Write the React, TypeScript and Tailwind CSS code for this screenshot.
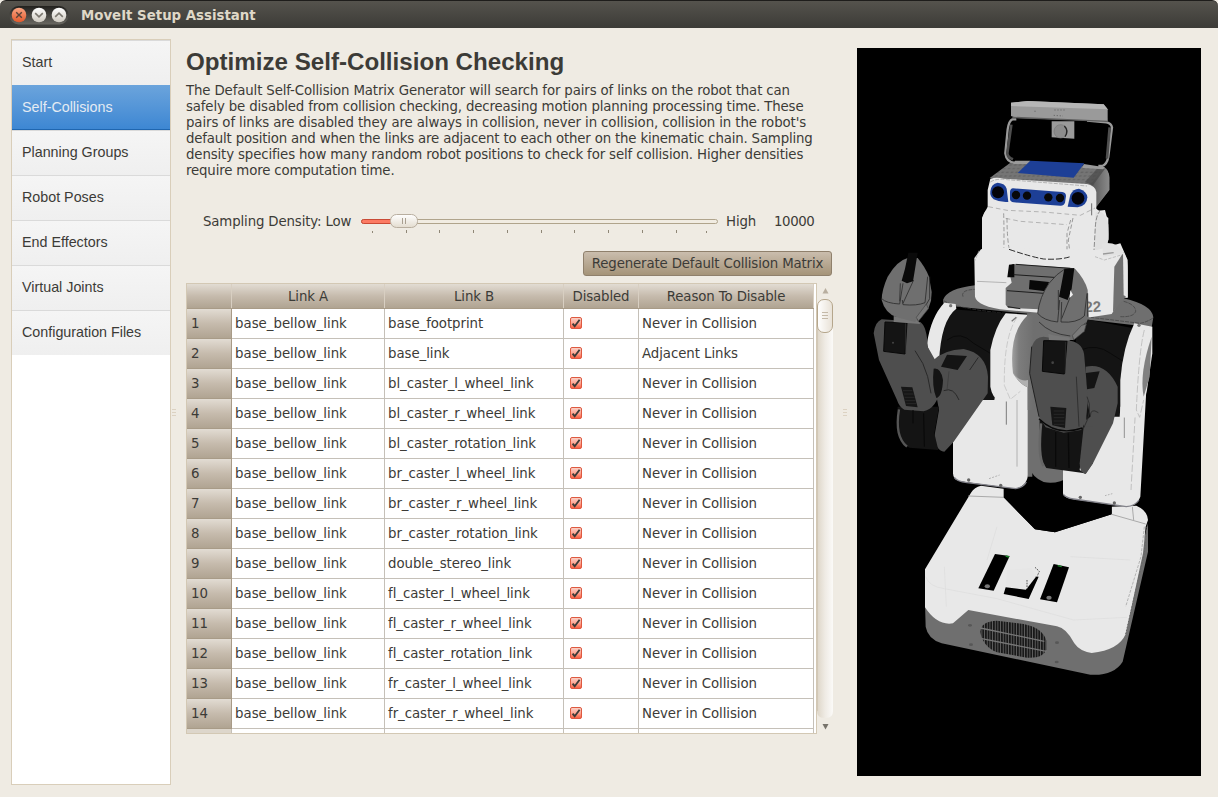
import React from "react";

const navItems = [
  "Start",
  "Self-Collisions",
  "Planning Groups",
  "Robot Poses",
  "End Effectors",
  "Virtual Joints",
  "Configuration Files",
];

const intro: [string, string][] = [
  ["tracking-[-0.137px]", "The Default Self-Collision Matrix Generator will search for pairs of links on the robot that can"],
  ["tracking-[-0.15px]", "safely be disabled from collision checking, decreasing motion planning processing time. These"],
  ["tracking-[-0.107px]", "pairs of links are disabled they are always in collision, never in collision, collision in the robot's"],
  ["tracking-[-0.18px]", "default position and when the links are adjacent to each other on the kinematic chain. Sampling"],
  ["tracking-[-0.137px]", "density specifies how many random robot positions to check for self collision. Higher densities"],
  ["tracking-[-0.16px]", "require more computation time."],
];

const rows: [string, string][] = [
  ["base_footprint", "Never in Collision"],
  ["base_link", "Adjacent Links"],
  ["bl_caster_l_wheel_link", "Never in Collision"],
  ["bl_caster_r_wheel_link", "Never in Collision"],
  ["bl_caster_rotation_link", "Never in Collision"],
  ["br_caster_l_wheel_link", "Never in Collision"],
  ["br_caster_r_wheel_link", "Never in Collision"],
  ["br_caster_rotation_link", "Never in Collision"],
  ["double_stereo_link", "Never in Collision"],
  ["fl_caster_l_wheel_link", "Never in Collision"],
  ["fl_caster_r_wheel_link", "Never in Collision"],
  ["fl_caster_rotation_link", "Never in Collision"],
  ["fr_caster_l_wheel_link", "Never in Collision"],
  ["fr_caster_r_wheel_link", "Never in Collision"],
];

const ticks = [11, 45, 78, 112, 146, 180, 213, 247, 281, 315, 345];

function WindowButtons() {
  return (
    <svg width="60" height="20" viewBox="0 0 60 20" className="shrink-0">
      <defs>
        <linearGradient id="wb-tray" x1="0" y1="0" x2="0" y2="1">
          <stop offset="0" stopColor="#22211e" />
          <stop offset="1" stopColor="#6a6862" />
        </linearGradient>
        <linearGradient id="wb-close" x1="0" y1="0" x2="0" y2="1">
          <stop offset="0" stopColor="#f9a583" />
          <stop offset="1" stopColor="#e2592c" />
        </linearGradient>
        <linearGradient id="wb-plain" x1="0" y1="0" x2="0" y2="1">
          <stop offset="0" stopColor="#ffffff" />
          <stop offset="1" stopColor="#cfcac0" />
        </linearGradient>
      </defs>
      <rect x="0.5" y="1" width="59" height="18.5" rx="9" fill="url(#wb-tray)" />
      <circle cx="10" cy="10" r="7.3" fill="url(#wb-close)" />
      <circle cx="30" cy="10" r="7.3" fill="url(#wb-plain)" />
      <circle cx="50" cy="10" r="7.3" fill="url(#wb-plain)" />
      <path d="M7.2 7.2l5.6 5.6M12.8 7.2l-5.6 5.6" stroke="#5a4238" strokeWidth="1.4" />
      <path d="M26.2 8.2l3.8 3.6l3.8-3.6" fill="none" stroke="#7b776f" strokeWidth="1.6" />
      <path d="M46.2 11.8l3.8-3.6l3.8 3.6" fill="none" stroke="#7b776f" strokeWidth="1.6" />
    </svg>
  );
}

function Check() {
  return (
    <svg width="12" height="12" viewBox="0 0 12 12">
      <defs>
        <linearGradient id="ck" x1="0" y1="0" x2="0" y2="1">
          <stop offset="0" stopColor="#fbd3ca" />
          <stop offset="0.5" stopColor="#fda794" />
          <stop offset="1" stopColor="#f9593c" />
        </linearGradient>
      </defs>
      <rect x="0.5" y="0.5" width="11" height="11" rx="1.5" fill="url(#ck)" stroke="#dd5a41" />
      <path d="M2.6 6.6L4.7 9.3L9.6 2.8" fill="none" stroke="#3c3b37" strokeWidth="1.9" />
    </svg>
  );
}

function Grip() {
  return (
    <svg width="4" height="7" viewBox="0 0 4 7" className="shrink-0">
      {[0, 3, 6].map((y) => (
        <rect key={y} x="0" y={y} width="4" height="1" fill="#dcd2c2" />
      ))}
    </svg>
  );
}

function Robot() {
  const W = "#e8e8e8";
  const G = "#6f6f6f";
  const D = "#4e4e4e";
  const K = "#141414";
  return (
    <svg width="344" height="728" viewBox="0 -126 1032 2184" className="block">
      <defs>
        <linearGradient id="headside" x1="0" y1="0" x2="1" y2="0">
          <stop offset="0" stopColor="#555" />
          <stop offset="1" stopColor="#8a8a8a" />
        </linearGradient>
        <linearGradient id="spine" gradientUnits="userSpaceOnUse" x1="462" y1="0" x2="530" y2="0">
          <stop offset="0" stopColor="#a5a5a5" />
          <stop offset="0.35" stopColor="#7d7d7d" />
          <stop offset="1" stopColor={G} />
        </linearGradient>
        <pattern id="holes" width="14" height="11" patternUnits="userSpaceOnUse" patternTransform="skewX(-25)">
          <rect width="14" height="11" fill="#757575" />
          <rect x="2" y="3" width="8" height="4" fill="#646464" />
        </pattern>
        <pattern id="grille" width="8" height="40" patternUnits="userSpaceOnUse">
          <rect width="8" height="40" fill="#666" />
          <rect width="5.5" height="40" fill="#191919" />
        </pattern>
      </defs>

      {/* mobile base */}
      <g transform="translate(0,1170)">
        <path d="M204 370L206 440Q212 476 254 490L700 584Q770 588 797 545L873 215V130L800 420Z" fill={G} />
        <path d="M204 268L342 38Q352 22 372 17L450 28L440 52L534 148L594 157L764 103V80L838 77Q872 92 873 120L866 140L858 220L806 462Q786 510 704 519Q668 514 652 490Q628 444 600 439L334 390L288 430Q240 438 204 382Z" fill={W} />
        <path d="M440 52L534 148L594 157L764 103V0H440Z" fill="#000" />
        <path d="M870 140L862 220L806 462" fill="none" stroke="#666" strokeWidth="3" strokeDasharray="5 4" />
        <path d="M862 140L852 230L806 380" fill="none" stroke="#999" strokeWidth="2" strokeDasharray="9 4" />
        <path d="M334 48L440 52M764 103L866 132M826 80L830 120" fill="none" stroke="#aaa" strokeWidth="3" />
        <path d="M206 290Q216 320 262 326L420 356L650 420L810 412M262 260L268 380M420 140L390 240M640 230L820 240" fill="none" stroke="#dddddd" strokeWidth="2" />
        <path d="M414 222L458 228L410 332L364 325Z" fill="#000" />
        <path d="M590 252L636 262L600 367L549 358Z" fill="#000" />
        <path d="M530 290H545L515 357L440 342L446 322L506 329Z" fill="#000" />
        <path d="M450 270L524 264L536 292L508 328L446 318Z" fill="#e6e6e6" />
        <path d="M534 262L547 274L540 290M510 300V326" fill="none" stroke="#555" strokeWidth="3" strokeDasharray="5 3" />
        <path d="M446 228L456 231M602 257L614 260" stroke="#1c8a2c" strokeWidth="4" />
        <ellipse cx="391" cy="319" rx="8" ry="6" fill="#777" />
        <ellipse cx="576" cy="353" rx="8" ry="6" fill="#777" />
        <path d="M370 455Q372 424 420 422L500 432Q558 444 568 482V508Q560 536 510 533L420 517Q376 498 370 455Z" fill="url(#grille)" />
        <path d="M370 444L562 484M374 476L568 514" stroke="#777" strokeWidth="4" />
        {[[339, 436], [342, 494], [600, 488], [599, 546]].map(([x, y]) => (
          <ellipse key={y} cx={x} cy={y} rx="6" ry="4" fill="#575757" />
        ))}
      </g>

      {/* torso panels below the shoulders */}
      <g transform="translate(0,750)">
        <path d="M510 100H640V410Q600 434 560 426Q526 412 516 380Z" fill={G} />
        <path d="M288 300L370 178L514 130V400Q510 440 476 446L310 424Q288 420 288 400Z" fill={W} />
        <path d="M292 412Q300 424 330 428L476 446Q500 442 508 426" fill="none" stroke="#83838b" strokeWidth="4" />
        <path d="M448 184V254" stroke="#444" strokeWidth="2" />
        <path d="M480 180V380" stroke="#999" strokeWidth="2" />
        <path d="M396 416L428 405" stroke="#999" strokeWidth="2" strokeDasharray="6 4" />
        <path d="M618 390L700 370L760 220L868 150L850 470Q842 498 808 500L640 476Q618 472 618 460Z" fill={W} />
        <path d="M620 464Q628 474 650 477L808 500Q834 498 846 480" fill="none" stroke="#83838b" strokeWidth="4" />
        <path d="M802 232V294" stroke="#666" strokeWidth="2" />
        <path d="M836 200L822 450" stroke="#aaa" strokeWidth="2" strokeDasharray="22 7" />
        <path d="M744 467L766 461" stroke="#999" strokeWidth="2" strokeDasharray="5 4" />
        {[[335, 420], [431, 436], [670, 472], [772, 489]].map(([x, y]) => (
          <circle key={y} cx={x} cy={y} r="5" fill="#666" />
        ))}
      </g>

      {/* sensor bar and head */}
      <path d="M478 88H466Q456 92 452 118L445 190Q448 216 474 219H520M724 228H736Q750 222 754 200L765 112Q763 100 748 97L690 92" fill="none" stroke="#9a9a9a" strokeWidth="7" />
      <path d="M463 104L451 190Q452 202 468 208M758 112L750 206" fill="none" stroke="#4e4e4e" strokeWidth="8" />
      <path d="M462 38L512 33L740 43L752 58V94L478 84L462 78Z" fill="#9a9a9a" />
      <path d="M462 38L512 33L740 43L752 58L462 48Z" fill="#b6b6b6" />
      <path d="M466 82L752 94" stroke="#5e5e5e" strokeWidth="4" />
      <path d="M534 62V70M592 60H624M590 76L618 78" stroke="#555" strokeWidth="2" strokeDasharray="4 5" />
      <path d="M584 94H652V146L584 142Z" fill="#9a9a9a" />
      <circle cx="611" cy="124" r="20" fill="#8c8c8c" stroke="#777" strokeWidth="2" />
      <path d="M622 108Q636 122 624 140" fill="none" stroke="#252525" strokeWidth="4" />
      <path d="M398 264L458 220L520 214L735 232Q756 240 757 262V300L718 350L680 290Z" fill="url(#holes)" />
      <path d="M700 284L742 232Q757 240 757 266V300L718 350Z" fill="url(#headside)" />
      <path d="M684 276L720 236H744L708 286Z" fill="#484848" opacity="0.7" />
      <path d="M474 212H520L510 222H468ZM680 222L744 232L738 238L676 234Z" fill="#9a9a9a" />
      <path d="M520 212L682 220L650 263L482 249Z" fill="#1d3f96" />
      <path d="M400 266Q420 260 440 266L690 282Q716 288 718 306V356L754 384V450L714 516L640 498L375 480V384L392 350V300Z" fill={W} />
      <path d="M375 390Q378 366 392 356L690 366L744 360Q756 400 754 446Q748 490 714 516L700 500L375 476Z" fill={W} />
      <path d="M400 276Q420 264 450 269L690 288" fill="none" stroke="#999" strokeWidth="2" strokeDasharray="12 4" />
      <path d="M394 350L450 361L560 366L670 376L714 354M446 385L490 394L630 404" fill="none" stroke="#999" strokeWidth="2" strokeDasharray="14 9" />
      <path d="M716 366Q744 356 754 404V450Q744 494 714 516V390Z" fill="#e0e0e0" />
      <path d="M732 360Q718 370 715 410L710 500" fill="none" stroke="#777" strokeWidth="2.5" strokeDasharray="15 5" />
      <path d="M704 340V376" stroke="#555" strokeWidth="2.5" />
      <path d="M400 304Q402 282 422 278Q445 280 449 296L454 336Q430 338 410 328Q398 318 400 304Z" fill="#1d3f96" />
      <path d="M640 314Q648 296 666 296Q690 304 691 322Q690 348 662 352L632 350Z" fill="#1d3f96" />
      <path d="M468 295L616 306Q627 308 627 318L624 338Q620 348 610 347L470 337Q460 336 459 328V305Q460 296 468 295Z" fill="#1d3f96" />
      <circle cx="423" cy="307" r="18" fill="#030309" />
      <circle cx="663" cy="325" r="19" fill="#030309" />
      {[[477, 315], [510, 317], [574, 322], [609, 324]].map(([x, y]) => (
        <circle key={x} cx={x} cy={y} r="12.5" fill="#080808" />
      ))}
      <path d="M440 370Q442 440 440 490M450 384Q450 440 456 474M648 384L634 450L640 498M641 390L630 430V500" fill="none" stroke="#8a8a8a" strokeWidth="2.5" strokeDasharray="13 7" />
      <path d="M444 490H456V476M456 478Q520 500 560 507Q610 510 640 500" fill="none" stroke="#2c2c2c" strokeWidth="3" strokeDasharray="18 6" />

      {/* chest, shoulders, arms */}
      <g transform="translate(0,420)">
        <path d="M258 210Q270 176 354 166L470 180L800 205Q886 225 889 262L884 292L700 270L260 226Z" fill={G} />
        <path d="M260 212Q300 236 444 250M700 262L850 280Q870 276 888 264M318 200Q310 180 354 178M800 214Q836 224 836 244Q830 262 790 260" fill="none" stroke="#3d3d3d" strokeWidth="2" strokeDasharray="12 3" />
        <path d="M352 84L372 58L400 52L720 60L790 40L812 90V204L796 202L764 252L700 262L450 240Q360 230 354 200Z" fill={W} />
        <path d="M456 58Q520 80 560 87Q610 90 640 80" fill="none" stroke="#2c2c2c" strokeWidth="3" strokeDasharray="18 6" />
        <path d="M772 110L800 66L806 200L768 246Z" fill="#717171" />
        <path d="M798 66Q812 80 812 120V202L800 196Z" fill={W} />
        <path d="M736 40Q780 34 796 62L800 72L738 80Z" fill="#e2e2e2" />
        <path d="M738 72L770 68" stroke="#999" strokeWidth="4" />
        <path d="M360 154L448 158" stroke="#999" strokeWidth="2" />
        <path d="M714 80L742 90L796 74M366 62L354 92" fill="none" stroke="#aaa" strokeWidth="2" strokeDasharray="10 4" />
        <text x="683" y="247" fontFamily="Liberation Sans, sans-serif" fontSize="45" fontWeight="bold" fill="#777" transform="rotate(-3 683 247)">22</text>

        <path d="M262 236L450 250L430 400L412 510H250L240 380Q250 280 262 236Z" fill={K} />
        <path d="M646 260L826 294L800 400L788 560H690Z" fill={K} />
        <path d="M270 330Q310 300 350 340L400 370M670 360Q720 340 760 370L800 395" fill="none" stroke="#0a0a0a" strokeWidth="3" />
        <path d="M262 218L296 222L298 236Q252 270 246 396L226 386Q212 358 210 340Q222 260 262 218Z" fill={W} />
        <circle cx="281" cy="227" r="5" fill="#777" />
        <path d="M446 250L514 254V476L488 488L464 514H430Q406 506 400 470V360Q414 290 446 250Z" fill={W} />
        <path d="M510 250H650V330H560L526 420V740H512V310Z" fill={G} />
        <path d="M512 256L600 260V540H512V472Q488 462 468 430Q454 310 512 256Z" fill="url(#spine)" />
        <path d="M468 430Q488 462 513 472V450Q490 456 468 430Z" fill="#b0b0b0" />
        <path d="M480 262Q440 320 442 466L460 508L490 484" fill="none" stroke="#c4c4c4" strokeWidth="2.5" strokeDasharray="20 6" />
        <path d="M464 274L478 262" stroke="#777" strokeWidth="4" />
        <path d="M832 280L886 290V370L870 480L850 560Q820 566 790 560V450Q798 350 832 280Z" fill={W} />
        <path d="M884 320L878 440L860 500Q846 430 884 320Z" fill="#808080" />
        <path d="M862 300Q846 360 838 540L848 562L860 510" fill="none" stroke="#bbb" strokeWidth="2.5" strokeDasharray="22 6" />
        <circle cx="846" cy="286" r="5" fill="#777" />

        {/* raised wrist block */}
        <path d="M466 102L646 114L660 200L600 240L454 234L446 224V174L464 158L460 140Z" fill={G} />
        <path d="M456 104L472 102V142H451ZM518 150L576 156L566 184L516 178Z" fill="#080808" />
        <path d="M476 103L640 115M470 134L620 144M450 182L560 190M452 230L490 236" fill="none" stroke="#1d1d1d" strokeWidth="3" />

        {/* left arm */}
        <path d="M230 390Q260 360 320 357Q388 370 393 440L392 490L290 635L262 665Q234 660 232 620L246 540L224 420Z" fill={D} />
        <path d="M122 530L246 530L232 610L244 660L158 653Q122 636 120 590Z" fill={K} />
        <path d="M126 538Q112 620 150 650" fill="none" stroke="#555" strokeWidth="7" />
        <path d="M50 310Q54 276 74 268L190 276Q210 290 212 350L240 400L248 480Q240 534 200 544L142 539Q126 530 120 510L66 390Z" fill={D} />
        <path d="M84 276L150 279L144 372L80 364Z" fill={K} stroke="#090909" strokeWidth="3" />
        <circle cx="108" cy="338" r="3" fill="#444" />
        <path d="M132 470L166 472L182 532L147 528Z" fill="#161616" />
        <path d="M138 482H166M141 492H170M143 502H173M145 512H176M148 521H178" stroke="#303030" strokeWidth="2" />
        <path d="M230 416Q252 412 258 450Q256 500 238 504Q224 470 230 416ZM270 374L330 378L302 420L252 410Z" fill={K} />
        <path d="M174 362Q202 400 212 440L222 490M260 482Q290 470 306 510M364 382L338 420" fill="none" stroke="#292929" strokeWidth="3" />
        <path d="M146 280V370M276 424L270 480" fill="none" stroke="#3a3a3a" strokeWidth="2" />
        <path d="M168 540V580M200 550L202 650" stroke="#070707" strokeWidth="3" />
        <path d="M110 258L182 270L190 282L110 276Z" fill="#777" />
        <path d="M74 210Q74 180 92 140Q120 92 152 84L182 84Q204 110 216 140L224 186L222 212L214 236L174 276L120 262Q84 250 74 210Z" fill={G} />
        <path d="M74 206Q88 220 128 222L138 160M136 210L138 224Q180 228 204 218L212 140M138 220L170 150M218 140V206L184 264M130 160L128 214" fill="none" stroke="#2c2c2c" strokeWidth="2.5" />
        <path d="M178 262L208 222L214 236L184 274Z" fill="#777" stroke="#444" strokeWidth="2" />
        <path d="M154 68H182L172 130L168 154L150 160L134 152L144 116Z" fill="#0a0a0a" />

        {/* right arm */}
        <path d="M686 410Q748 396 782 470V520L768 580L708 700L686 732Q668 728 668 700L680 590Z" fill={D} />
        <path d="M680 430L728 424L712 474L690 478ZM688 500L700 560L688 570Z" fill={K} />
        <path d="M548 570L684 590L668 720L684 730L568 714Q548 690 546 640Z" fill={K} />
        <path d="M680 590L668 700Q668 728 686 732L708 700V590Z" fill={D} />
        <path d="M552 580Q542 680 560 708" fill="none" stroke="#666" strokeWidth="8" />
        <path d="M524 350Q534 320 560 320L640 332Q680 340 682 380L688 450L692 520Q686 586 672 600L620 608L566 592L546 560L518 430Z" fill={D} />
        <path d="M524 350L518 430L546 560" fill="none" stroke="#222" strokeWidth="3" />
        <path d="M560 332L630 332L622 432L556 424Z" fill={K} stroke="#080808" strokeWidth="3" />
        <circle cx="587" cy="398" r="4" fill="#444" />
        <path d="M580 530L628 534L624 594L586 586Z" fill="#161616" />
        <path d="M590 543H622M590 553H622M590 563H622M590 573H622M591 583H622" stroke="#303030" strokeWidth="2" />
        <path d="M658 440L666 590M626 336L624 430M700 560Q700 532 724 548M690 500Q710 540 680 594" fill="none" stroke="#2a2a2a" strokeWidth="2.5" />
        <path d="M546 566Q600 620 676 594M596 606V710M634 610L636 714" fill="none" stroke="#090909" strokeWidth="4" />
        <path d="M574 312L638 320V332L576 330Z" fill="#777" />
        <path d="M542 240Q548 200 576 160Q600 130 622 118L654 116Q684 148 692 180L695 260L686 284L646 324L588 316Q554 302 546 272Z" fill={G} />
        <path d="M622 118Q600 130 576 160Q548 200 542 250Q560 272 602 276L608 210M614 216L612 276Q660 280 682 258L690 190M614 266L640 200M692 190V260M686 278L650 322M546 276Q580 312 640 318M604 180V240" fill="none" stroke="#2c2c2c" strokeWidth="2.5" />
        <path d="M622 116L652 114L644 176L632 210L606 200L612 170Z" fill="#0a0a0a" />
        <path d="M640 180L648 194L638 204Z" fill="#eee" />
        <path d="M646 316L674 286L688 282L682 304L650 330Z" fill="#7a7a7a" stroke="#444" strokeWidth="2" />
      </g>
    </svg>
  );
}

const cell = "border-r border-[#c5c0b8] pl-[3px] flex items-center";
const headCell =
  "flex items-center justify-center border-r border-[#d8cfc2] pt-[2px] tracking-[-0.12px]";
const headBg =
  "bg-linear-to-b from-[#e2dcd3] via-[#c6bbad] to-[#b0a492]";

export default function App() {
  return (
    <div className="flex h-[797px] w-[1218px] flex-col overflow-hidden bg-[#efebe3] font-['DejaVu_Sans',sans-serif] text-[13.33px] text-[#3c3b37]">
      <header className="flex h-7 shrink-0 items-center gap-[12px] rounded-t-md border-t border-[#1e1d1b] bg-linear-to-b from-[#55534d] to-[#3c3b37] pl-[9px]">
        <WindowButtons />
        <span className="pt-[2px] font-bold whitespace-nowrap text-[#dfd8c8]">MoveIt Setup Assistant</span>
      </header>

      <div className="flex min-h-0 flex-1 pl-[11px]">
        <nav className="mt-[11px] h-[746px] w-40 shrink-0 border border-[#d9ceba] bg-white font-['Liberation_Sans',sans-serif] text-[14.3px]">
          {navItems.map((item, i) => (
            <div
              key={item}
              className={
                i === 1
                  ? "flex h-[45px] items-center border-b border-[#1f66b0] bg-linear-to-b from-[#6ba4dc] to-[#3d87d3] pt-[2px] pl-[10px] text-[#e4ebf3]"
                  : "flex h-[45px] items-center border-t border-[#dadada] bg-linear-to-b from-[#f5f5f5] to-[#efefef] pl-[10px]"
              }
            >
              <span className="whitespace-nowrap">{item}</span>
            </div>
          ))}
        </nav>

        <div className="flex w-[15px] shrink-0 justify-start pt-[381px] pl-px">
          <Grip />
        </div>

        <main className="flex w-[647px] shrink-0 flex-col">
          <h1 className="mt-[18px] h-8 font-['Liberation_Sans',sans-serif] text-[24.15px] leading-8 font-bold whitespace-nowrap">
            Optimize Self-Collision Checking
          </h1>
          <div className="mt-[5px] leading-4 whitespace-nowrap">
            {intro.map(([tracking, line]) => (
              <p key={line} className={tracking}>{line}</p>
            ))}
          </div>

          <div className="mt-[32px] flex h-[20px] pl-[17px] leading-[22px] tracking-[-0.14px] whitespace-nowrap">
            <span className="w-[158px]">Sampling Density: Low</span>
            <div className="w-[365px] pt-[2px]">
              <svg width="358" height="22" viewBox="0 0 358 22">
                <defs>
                  <linearGradient id="handle" x1="0" y1="0" x2="0" y2="1">
                    <stop offset="0" stopColor="#ffffff" />
                    <stop offset="1" stopColor="#e3dccf" />
                  </linearGradient>
                </defs>
                <rect x="0.5" y="6.5" width="356" height="4" rx="2" fill="#f1ece2" stroke="#b0a48c" />
                <rect x="0.5" y="6.5" width="40" height="4" rx="2" fill="#fc7a63" stroke="#c94a35" />
                <rect x="29.5" y="1.5" width="27" height="13" rx="6" fill="url(#handle)" stroke="#b8ae9f" />
                <path d="M41.5 5v6M44.5 5v6" stroke="#a99f90" />
                {ticks.map((x) => (
                  <rect key={x} x={x} y={x === 11 || x === 345 ? 18 : 17} width="1" height={x === 11 || x === 345 ? 2 : 3} fill="#8f8777" />
                ))}
              </svg>
            </div>
            <span className="w-[48px]">High</span>
            <span className="tracking-[-0.4px]">10000</span>
          </div>

          <button className="mt-[20px] mr-px h-[25px] w-[249px] self-end rounded-[3px] border border-[#8f806c] bg-linear-to-b from-[#cabdad] to-[#a59479] leading-[23px] tracking-[-0.14px] whitespace-nowrap">
            Regenerate Default Collision Matrix
          </button>

          <div className="mt-[7px] flex">
            <section className="flex h-[451px] w-[631px] shrink-0 flex-col overflow-hidden border border-[#d3c8b4] bg-white">
              <div className={`grid h-[25px] w-[627px] shrink-0 grid-cols-[45px_153px_179px_75px_175px] border-b border-[#a89b87] ${headBg}`}>
                <div className={headCell} />
                <div className={headCell}>Link A</div>
                <div className={headCell}>Link B</div>
                <div className={headCell}>Disabled</div>
                <div className={headCell}>Reason To Disable</div>
              </div>
              {rows.map(([linkB, reason], i) => (
                <div key={linkB} className="grid h-[30px] w-[627px] shrink-0 grid-cols-[45px_153px_179px_75px_175px] leading-4 whitespace-nowrap">
                  <div className={`flex items-center border-r border-b border-[#a89b87] pl-1 ${headBg}`}>{i + 1}</div>
                  <div className={`border-b ${cell}`}>base_bellow_link</div>
                  <div className={`border-b tracking-[-0.06px] ${cell}`}>{linkB}</div>
                  <div className="flex items-start border-r border-b border-[#c5c0b8] pt-2 pl-[6px]">
                    <Check />
                  </div>
                  <div className={`border-b tracking-[-0.07px] ${cell}`}>{reason}</div>
                </div>
              ))}
              <div className="grid h-1 w-[627px] shrink-0 grid-cols-[45px_153px_179px_75px_175px]">
                <div className="border-r border-[#c5c0b8] bg-[#ddd6cb]" />
                <div className={cell} />
                <div className={cell} />
                <div className={cell} />
                <div className={cell} />
              </div>
            </section>
            <svg width="16" height="451" viewBox="0 0 16 451" className="shrink-0">
              <defs>
                <linearGradient id="track" x1="0" y1="0" x2="1" y2="0">
                  <stop offset="0" stopColor="#ddd5c7" />
                  <stop offset="0.5" stopColor="#efebe4" />
                  <stop offset="1" stopColor="#fbfaf8" />
                </linearGradient>
                <linearGradient id="thumb" x1="0" y1="0" x2="1" y2="0">
                  <stop offset="0" stopColor="#ffffff" />
                  <stop offset="1" stopColor="#e8e1d6" />
                </linearGradient>
              </defs>
              <path d="M5.5 10.5L8.5 5L11.5 10.5Z" fill="#b8ae9f" />
              <path d="M0 24H16V428Q16 435 9 435H7Q0 435 0 428Z" fill="url(#track)" />
              <path d="M0.5 30V428" stroke="#d2c8b7" />
              <rect x="0.5" y="16.5" width="15" height="33" rx="6.5" fill="url(#thumb)" stroke="#b5a68c" />
              <path d="M5 29.5h6M5 32.5h6M5 35.5h6" stroke="#c4b9a8" />
              <path d="M5.5 441H11.5L8.5 446.5Z" fill="#77736b" />
            </svg>
          </div>
        </main>

        <div className="flex w-[24px] shrink-0 justify-start pt-[381px] pl-[10px]">
          <Grip />
        </div>

        <div className="mt-5 h-[728px] w-[344px] shrink-0 bg-black">
          <Robot />
        </div>
      </div>
    </div>
  );
}
